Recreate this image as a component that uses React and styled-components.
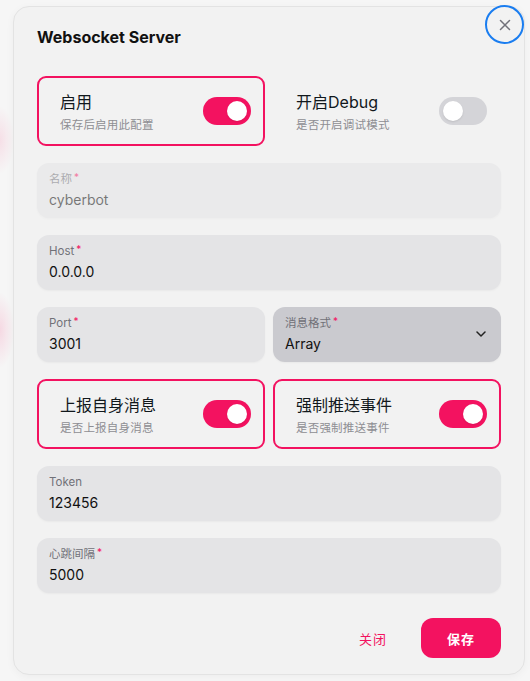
import React from "react";
import styled, { createGlobalStyle } from "styled-components";

const GlobalStyle = createGlobalStyle`
  html, body { margin: 0; padding: 0; }
  body {
    background: #f6f6f6;
    font-family: Inter, "Noto Sans CJK SC", sans-serif;
    color: #11181c;
  }
  * { box-sizing: border-box; }
`;

const Backdrop = styled.div`
  min-height: 681px;
  padding: 6px 5px 6px 13px;
  background:
    radial-gradient(ellipse 14px 34px at 0px 140px, rgba(243, 18, 96, 0.1), transparent),
    radial-gradient(ellipse 14px 38px at 0px 330px, rgba(243, 18, 96, 0.13), transparent),
    #f6f6f6;
`;

const Modal = styled.div`
  position: relative;
  width: 512px;
  height: 669px;
  background: #f2f2f2;
  border: 1px solid #e3e3e3;
  border-radius: 16px;
  box-shadow: 0 2px 8px rgba(0, 0, 0, 0.04);
  display: flex;
  flex-direction: column;
`;

const CloseButton = styled.button`
  position: absolute;
  top: -2px;
  right: 0px;
  width: 39px;
  height: 39px;
  border-radius: 50%;
  border: 2px solid #1a7df0;
  background: transparent;
  display: flex;
  align-items: center;
  justify-content: center;
  padding: 0;
  color: #71717a;
`;

const Header = styled.div`
  padding: 16px 24px 0 23px;
  height: 69px;
`;

const Title = styled.h2`
  margin: 0;
  font-family: Inter, sans-serif;
  font-size: 16px;
  font-weight: 700;
  line-height: 28px;
  color: #111;
`;

const Body = styled.div`
  padding: 0 23px 0 23px;
  display: flex;
  flex-direction: column;
  gap: 17px;
`;

const Row = styled.div`
  display: grid;
  grid-template-columns: 1fr 1fr;
  gap: 8px;
`;

const SwitchCard = styled.div`
  height: 70px;
  border-radius: 9px;
  border: 2px solid ${(p) => (p.$active ? "#f31260" : "transparent")};
  display: flex;
  align-items: center;
  justify-content: space-between;
  padding: 0 12px 0 21px;
`;

const SwitchText = styled.div`
  display: flex;
  flex-direction: column;
  gap: 3px;
`;

const SwitchLabel = styled.div`
  font-family: Inter, "Noto Sans CJK SC", sans-serif;
  font-size: 16px;
  line-height: 22px;
  color: #11181c;
`;

const SwitchDesc = styled.div`
  font-family: "Noto Sans CJK SC", sans-serif;
  font-size: 11.5px;
  line-height: 16px;
  color: #8e8e93;
  letter-spacing: 0.2px;
`;

const Track = styled.div`
  width: 48px;
  height: 28px;
  border-radius: 14px;
  background: ${(p) => (p.$on ? "#f31260" : "#d4d4d8")};
  display: flex;
  align-items: center;
  justify-content: ${(p) => (p.$on ? "flex-end" : "flex-start")};
  padding: 0 4px;
  flex-shrink: 0;
`;

const Knob = styled.div`
  width: 20px;
  height: 20px;
  border-radius: 50%;
  background: #fff;
  box-shadow: 0 1px 2px rgba(0, 0, 0, 0.1);
`;

const Field = styled.div`
  position: relative;
  height: 55px;
  border-radius: 12px;
  background: ${(p) => p.$bg || "#e4e4e6"};
  box-shadow: 0 1px 2px rgba(0, 0, 0, 0.04);
  padding: 8px 12px 0 12px;
  display: flex;
  flex-direction: column;
  opacity: ${(p) => (p.$disabled ? 0.55 : 1)};
`;

const FieldLabel = styled.label`
  font-family: Inter, "Noto Sans CJK SC", sans-serif;
  font-size: 11.5px;
  line-height: 16px;
  color: #717178;
  display: flex;
  align-items: flex-start;
`;

const Required = styled.span`
  color: #f31260;
  font-size: 10px;
  line-height: 12px;
  margin-left: 2px;
`;

const FieldValue = styled.div`
  font-family: Inter, "Noto Sans CJK SC", sans-serif;
  font-size: 14px;
  line-height: 20px;
  margin-top: 3px;
  color: #111;
`;

const Chevron = styled.span`
  position: absolute;
  right: 15px;
  top: 24px;
  display: flex;
  color: #222;
`;

const Footer = styled.div`
  margin-top: auto;
  padding: 0 23px 16px 24px;
  display: flex;
  justify-content: flex-end;
  align-items: center;
  gap: 8px;
`;

const TextButton = styled.button`
  border: none;
  background: transparent;
  color: #f31260;
  font-family: "Noto Sans CJK SC", sans-serif;
  font-size: 13px;
  height: 40px;
  width: 80px;
  padding: 0;
  letter-spacing: 1px;
`;

const PrimaryButton = styled.button`
  border: none;
  background: #f31260;
  color: #fff;
  font-family: "Noto Sans CJK SC", sans-serif;
  font-weight: 700;
  font-size: 13px;
  height: 40px;
  width: 80px;
  border-radius: 12px;
  padding: 0;
  letter-spacing: 1px;
`;

function Switch({ on }) {
  return (
    <Track $on={on}>
      <Knob />
    </Track>
  );
}

function SwitchItem({ label, desc, on }) {
  return (
    <SwitchCard $active={on}>
      <SwitchText>
        <SwitchLabel>{label}</SwitchLabel>
        <SwitchDesc>{desc}</SwitchDesc>
      </SwitchText>
      <Switch on={on} />
    </SwitchCard>
  );
}

function InputField({ label, value, required, disabled, bg, children }) {
  return (
    <Field $disabled={disabled} $bg={bg}>
      <FieldLabel>
        {label}
        {required && <Required>*</Required>}
      </FieldLabel>
      <FieldValue>{value}</FieldValue>
      {children}
    </Field>
  );
}

export default function App() {
  return (
    <>
      <GlobalStyle />
      <Backdrop>
        <Modal>
          <CloseButton aria-label="close">
            <svg width="12" height="12" viewBox="0 0 12 12" fill="none" stroke="currentColor" strokeWidth="1.5" strokeLinecap="round">
              <path d="M1.5 1.5L10.5 10.5M10.5 1.5L1.5 10.5" />
            </svg>
          </CloseButton>
          <Header>
            <Title>Websocket Server</Title>
          </Header>
          <Body>
            <Row>
              <SwitchItem label="启用" desc="保存后启用此配置" on />
              <SwitchItem label="开启Debug" desc="是否开启调试模式" on={false} />
            </Row>
            <InputField label="名称" value="cyberbot" required disabled />
            <InputField label="Host" value="0.0.0.0" required />
            <Row>
              <InputField label="Port" value="3001" required />
              <InputField label="消息格式" value="Array" required bg="#cacacf">
                <Chevron>
                  <svg width="10" height="6" viewBox="0 0 10 6" fill="none" stroke="currentColor" strokeWidth="1.5" strokeLinecap="round" strokeLinejoin="round">
                    <path d="M1 1L5 5L9 1" />
                  </svg>
                </Chevron>
              </InputField>
            </Row>
            <Row>
              <SwitchItem label="上报自身消息" desc="是否上报自身消息" on />
              <SwitchItem label="强制推送事件" desc="是否强制推送事件" on />
            </Row>
            <InputField label="Token" value="123456" />
            <InputField label="心跳间隔" value="5000" required />
          </Body>
          <Footer>
            <TextButton>关闭</TextButton>
            <PrimaryButton>保存</PrimaryButton>
          </Footer>
        </Modal>
      </Backdrop>
    </>
  );
}
